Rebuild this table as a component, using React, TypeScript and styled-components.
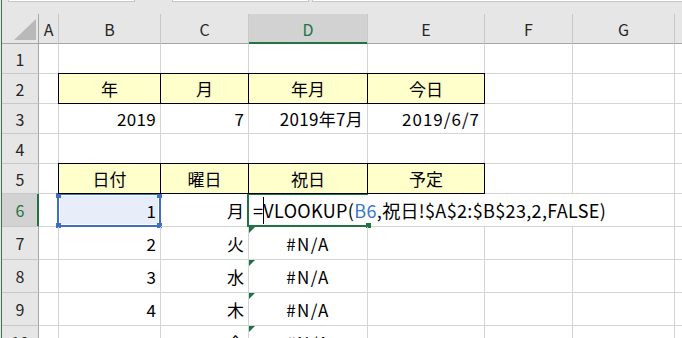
import React from "react";
import styled, { createGlobalStyle, css } from "styled-components";

const GlobalStyle = createGlobalStyle`
  html, body { margin: 0; padding: 0; background: #ffffff; overflow: hidden; }
  body { font-family: "Noto Sans CJK JP", "Noto Sans", sans-serif; }
`;

const GREEN = "#217346";
const BLUE = "#3f6fc4";

const Window = styled.div`
  display: flex;
  width: 682px;
  height: 338px;
  overflow: hidden;
  background: #ffffff;
`;

const WindowEdge = styled.div`
  flex: 0 0 2px;
  box-sizing: border-box;
  border-left: 1px solid #e6e6e6;
  background: #3d7353;
`;

const Main = styled.div`
  flex: 1;
  display: flex;
  flex-direction: column;
  min-width: 0;
`;

const FormulaStrip = styled.div`
  height: 14px;
  flex: 0 0 14px;
  display: flex;
  align-items: flex-start;
  background: #e6e6e6;
`;

const FieldBox = styled.div<{ $w?: number; $ml: number }>`
  box-sizing: border-box;
  height: 2px;
  margin-left: ${(p) => p.$ml}px;
  ${(p) => (p.$w ? `width: ${p.$w}px;` : "flex: 1;")}
  background: #ffffff;
  border: 1px solid #c6c6c6;
  border-top: none;
  ${(p) => (p.$w ? "" : "border-right: none;")}
`;

const Sheet = styled.div`
  display: grid;
  grid-template-columns: 37px 20px 102px 88px 119px 117px 88px 102px 1fr;
  grid-template-rows: 30px repeat(5, 30px) repeat(5, 33px);
`;

const Corner = styled.div`
  box-sizing: border-box;
  background: #e6e6e6;
  border-right: 1px solid #a6a6a6;
  border-bottom: 1px solid #a6a6a6;
  display: flex;
  justify-content: flex-end;
  align-items: flex-end;
  padding: 0 2px 3px 0;
`;

const ColHead = styled.div<{ $active?: boolean }>`
  box-sizing: border-box;
  background: #e6e6e6;
  border-right: 1px solid #c8c8c8;
  border-bottom: 1px solid #a6a6a6;
  display: flex;
  align-items: center;
  justify-content: center;
  font-size: 16px;
  color: #262626;
  ${(p) =>
    p.$active &&
    css`
      background: #d2d2d2;
      color: ${GREEN};
      border-bottom-color: ${GREEN};
      box-shadow: inset 0 -1px 0 ${GREEN};
    `}
`;

const RowHead = styled.div<{ $active?: boolean }>`
  box-sizing: border-box;
  background: #e6e6e6;
  border-right: 1px solid #a6a6a6;
  border-bottom: 1px solid #c8c8c8;
  display: flex;
  align-items: center;
  justify-content: center;
  font-size: 16px;
  color: #262626;
  ${(p) =>
    p.$active &&
    css`
      background: #d2d2d2;
      color: ${GREEN};
      border-right-color: ${GREEN};
      box-shadow: inset -1px 0 0 ${GREEN};
    `}
`;

type Align = "left" | "right" | "center";

const Cell = styled.div<{ $align?: Align; $boxed?: boolean; $flag?: boolean; $track?: number }>`
  box-sizing: border-box;
  position: relative;
  border-right: 1px solid #d4d4d4;
  border-bottom: 1px solid #d4d4d4;
  display: flex;
  align-items: center;
  justify-content: ${(p) =>
    p.$align === "right" ? "flex-end" : p.$align === "center" ? "center" : "flex-start"};
  padding: 0 4px;
  font-size: 17px;
  color: #000000;
  white-space: nowrap;
  letter-spacing: ${(p) => p.$track ?? 0}px;
  ${(p) =>
    p.$boxed &&
    css`
      z-index: 1;
      background: #ffffcc;
      border-color: #000000;
      box-shadow: -1px 0 0 #000000, 0 -1px 0 #000000, -1px -1px 0 #000000;
    `}
  ${(p) =>
    p.$flag &&
    css`
      &::before {
        content: "";
        position: absolute;
        left: 0;
        top: 0;
        border-top: 6px solid #1e7145;
        border-right: 6px solid transparent;
      }
    `}
`;

const SelectedCell = styled(Cell)`
  background: #e8eef9;
`;

const RefFrame = styled.div`
  position: absolute;
  left: -2px;
  top: -1px;
  width: 104px;
  height: 34px;
  box-sizing: border-box;
  border: 2px solid ${BLUE};
  box-shadow: inset 0 0 0 1px #ffffff;
  pointer-events: none;
`;

const Handle = styled.span<{ $color: string }>`
  position: absolute;
  width: 5px;
  height: 5px;
  background: ${(p) => p.$color};
`;

const EditCell = styled(Cell)`
  grid-column: span 4;
  background: #ffffff;
  font-size: 18px;
  letter-spacing: 0.35px;
`;

const ActiveFrame = styled.div`
  position: absolute;
  left: -2px;
  top: -1px;
  width: 121px;
  height: 34px;
  box-sizing: border-box;
  border: 2px solid ${GREEN};
  border-right: none;
  pointer-events: none;
`;

const Caret = styled.span`
  display: inline-block;
  width: 1px;
  height: 27px;
  margin-right: -1px;
  background: #000000;
  vertical-align: middle;
`;

const Ref = styled.span`
  color: #3b76cf;
`;

const SelectAllTriangle = () => (
  <svg width="22" height="21" viewBox="0 0 22 21">
    <polygon points="22,0 22,21 0,21" fill="#b9b9b9" />
  </svg>
);

const COLS = ["A", "B", "C", "D", "E", "F", "G", ""];

type Def = { t?: string; a?: Align; boxed?: boolean; flag?: boolean; track?: number };

const blank = (n: number): Def[] => Array.from({ length: n }, () => ({}));

const header = (labels: string[]): Def[] => [
  {},
  ...labels.map((t) => ({ t, a: "center" as Align, boxed: true })),
  ...blank(3),
];

const rows: { n: number; cells?: Def[] }[] = [
  { n: 1, cells: blank(8) },
  { n: 2, cells: header(["年", "月", "年月", "今日"]) },
  {
    n: 3,
    cells: [
      {},
      { t: "2019", a: "right", track: 0.3 },
      { t: "7", a: "right" },
      { t: "2019年7月", a: "right", track: 0.3 },
      { t: "2019/6/7", a: "right", track: 1 },
      ...blank(3),
    ],
  },
  { n: 4, cells: blank(8) },
  { n: 5, cells: header(["日付", "曜日", "祝日", "予定"]) },
  { n: 6 },
  ...[
    ["2", "火"],
    ["3", "水"],
    ["4", "木"],
    ["5", "金"],
  ].map(([d, w], i) => ({
    n: 7 + i,
    cells: [
      {},
      { t: d, a: "right" as Align },
      { t: w, a: "right" as Align },
      { t: "#N/A", a: "center" as Align, flag: true, track: 1.4 },
      ...blank(4),
    ],
  })),
];

export default function App() {
  return (
    <>
      <GlobalStyle />
      <Window>
        <WindowEdge />
        <Main>
          <FormulaStrip>
            <FieldBox $ml={6} $w={127} />
            <FieldBox $ml={37} $w={137} />
            <FieldBox $ml={3} />
          </FormulaStrip>
          <Sheet>
            <Corner>
              <SelectAllTriangle />
            </Corner>
            {COLS.map((c, i) => (
              <ColHead key={i} $active={c === "D"}>
                {c}
              </ColHead>
            ))}
            {rows.map((r) =>
              r.cells ? (
                <React.Fragment key={r.n}>
                  <RowHead>{r.n}</RowHead>
                  {r.cells.map((c, i) => (
                    <Cell key={i} $align={c.a} $boxed={c.boxed} $flag={c.flag} $track={c.track}>
                      {c.t}
                    </Cell>
                  ))}
                </React.Fragment>
              ) : (
                <React.Fragment key={r.n}>
                  <RowHead $active>{r.n}</RowHead>
                  <Cell />
                  <SelectedCell $align="right">
                    1
                    <RefFrame>
                      <Handle $color={BLUE} style={{ left: -3, top: -2 }} />
                      <Handle $color={BLUE} style={{ right: -3, top: -2 }} />
                      <Handle $color={BLUE} style={{ left: -3, bottom: -3 }} />
                      <Handle $color={BLUE} style={{ right: -3, bottom: -3 }} />
                    </RefFrame>
                  </SelectedCell>
                  <Cell $align="right">月</Cell>
                  <EditCell>
                    =<Caret />VLOOKUP(<Ref>B6</Ref>,祝日!$A$2:$B$23,2,FALSE)
                    <ActiveFrame>
                      <Handle $color={GREEN} style={{ right: -3, bottom: -3 }} />
                    </ActiveFrame>
                  </EditCell>
                  <Cell />
                </React.Fragment>
              )
            )}
          </Sheet>
        </Main>
      </Window>
    </>
  );
}
